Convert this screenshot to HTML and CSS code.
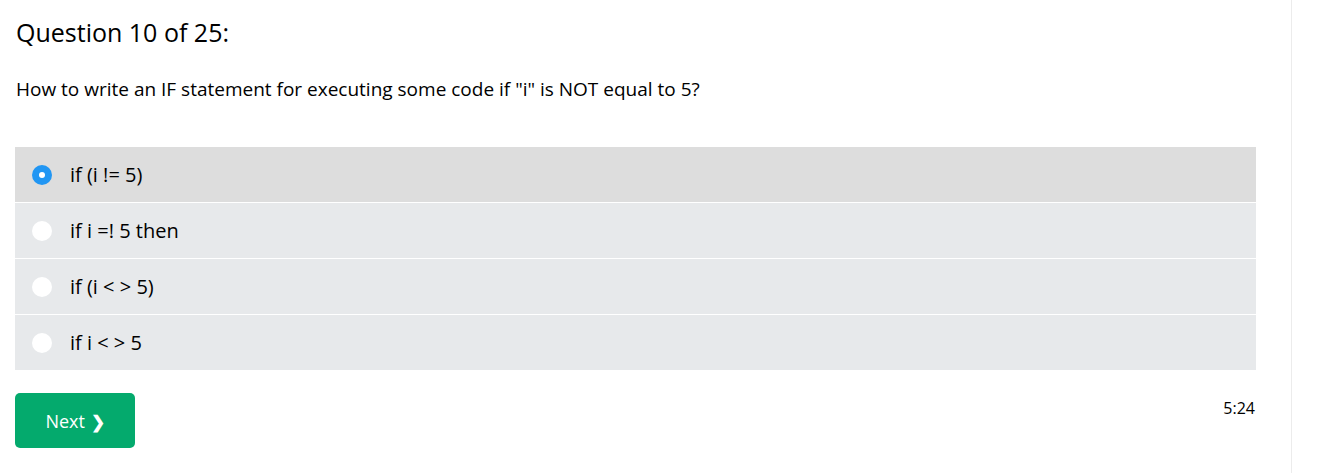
FILE: index.html
```html
<!DOCTYPE html>
<html>
<head>
<meta charset="utf-8">
<link rel="stylesheet" href="styles.css">
</head>
<body>
<div class="page">
  <main class="main">
    <h2 class="title">Question 10 of 25:</h2>
    <p class="question">How to write an IF statement for executing some code if "i" is NOT equal to 5?</p>
    <div class="options">
      <label class="option selected"><span class="radio"></span><span class="otext">if (i != 5)</span></label>
      <label class="option"><span class="radio"></span><span class="otext">if i =! 5 then</span></label>
      <label class="option"><span class="radio"></span><span class="otext">if (i &lt; &gt; 5)</span></label>
      <label class="option"><span class="radio"></span><span class="otext">if i &lt; &gt; 5</span></label>
    </div>
    <div class="footer">
      <button class="next">Next <span class="chev">&#10095;</span></button>
      <span class="timer">5:24</span>
    </div>
  </main>
  <aside class="side"></aside>
</div>
</body>
</html>
```
FILE: styles.css
```css
* { box-sizing: border-box; }
html, body { margin: 0; padding: 0; background: #fff; }
body { font-family: "Open Sans", "Noto Sans", sans-serif; color: #000; }
.page { display: flex; height: 473px; }
.main { width: 1291px; padding: 0 35px 0 15px; }
.side { flex: 1; border-left: 1px solid #ececec; }
.title { margin: 0; padding-top: 16px; font-size: 25px; font-weight: 400; line-height: 32px; padding-left: 1px; }
.question { margin: 0; padding-top: 29px; font-size: 19px; line-height: 24px; padding-left: 1px; }
.options { margin-top: 46px; display: flex; flex-direction: column; gap: 1px; }
.option { display: flex; align-items: center; height: 55px; background: #e7e9eb; padding-left: 17px; font-size: 20px; }
.option.selected { background: #dddddd; }
.radio { width: 20px; height: 20px; border-radius: 50%; background: #fff; flex: none; margin-right: 18px; position: relative; }
.selected .radio { background: #2196f3; }
.selected .radio::after { content: ""; position: absolute; left: 7px; top: 7px; width: 6px; height: 6px; border-radius: 50%; background: #fff; }
.footer { display: flex; justify-content: space-between; align-items: flex-start; margin-top: 23px; }
.next { width: 120px; height: 55px; border: none; border-radius: 5px; background: #04aa6d; color: #fff; font-family: inherit; font-size: 18px; padding: 0; }
.chev { font-weight: 700; font-size: 17px; margin-left: 1px; }
.timer { font-size: 16px; margin-top: 4px; margin-right: 1px; }
```
